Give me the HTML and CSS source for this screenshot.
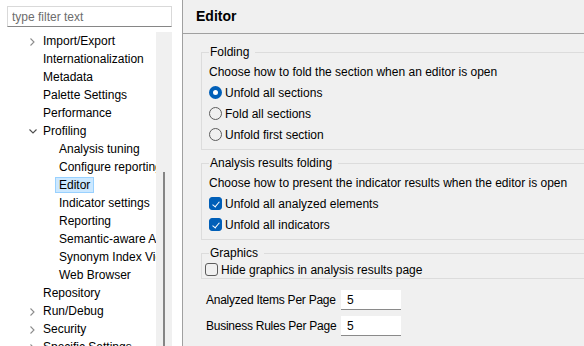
FILE: index.html
```html
<!DOCTYPE html>
<html>
<head>
    <title>Preferences - Editor</title>
    <link rel="stylesheet" href="styles.css">
</head>
<body>

<div class="window">
    <aside class="sidebar">
        <input class="filter" type="text" placeholder="type filter text">

        <div class="tree-area">
            <ul class="tree">
                <li class="row lvl1"><svg class="twistie" viewBox="0 0 16 16"><polyline class="closed" points="7.5,5.5 11,9 7.5,12.5"/></svg><span class="label">Import/Export</span></li>
                <li class="row lvl1"><span class="twistie"></span><span class="label">Internationalization</span></li>
                <li class="row lvl1"><span class="twistie"></span><span class="label">Metadata</span></li>
                <li class="row lvl1"><span class="twistie"></span><span class="label">Palette Settings</span></li>
                <li class="row lvl1"><span class="twistie"></span><span class="label">Performance</span></li>
                <li class="row lvl1"><svg class="twistie" viewBox="0 0 16 16"><polyline class="open" points="6.5,6.5 10,10 13.5,6.5"/></svg><span class="label">Profiling</span></li>
                <li class="row lvl2"><span class="twistie"></span><span class="label">Analysis tuning</span></li>
                <li class="row lvl2"><span class="twistie"></span><span class="label">Configure reporting</span></li>
                <li class="row lvl2"><span class="twistie"></span><span class="label selected">Editor</span></li>
                <li class="row lvl2"><span class="twistie"></span><span class="label">Indicator settings</span></li>
                <li class="row lvl2"><span class="twistie"></span><span class="label">Reporting</span></li>
                <li class="row lvl2"><span class="twistie"></span><span class="label">Semantic-aware Analysis</span></li>
                <li class="row lvl2"><span class="twistie"></span><span class="label">Synonym Index Viewer</span></li>
                <li class="row lvl2"><span class="twistie"></span><span class="label">Web Browser</span></li>
                <li class="row lvl1"><span class="twistie"></span><span class="label">Repository</span></li>
                <li class="row lvl1"><svg class="twistie" viewBox="0 0 16 16"><polyline class="closed" points="7.5,5.5 11,9 7.5,12.5"/></svg><span class="label">Run/Debug</span></li>
                <li class="row lvl1"><svg class="twistie" viewBox="0 0 16 16"><polyline class="closed" points="7.5,5.5 11,9 7.5,12.5"/></svg><span class="label">Security</span></li>
                <li class="row lvl1"><svg class="twistie" viewBox="0 0 16 16"><polyline class="closed" points="7.5,5.5 11,9 7.5,12.5"/></svg><span class="label">Specific Settings</span></li>
            </ul>
            <div class="scrollbar"><div class="thumb"></div></div>
        </div>
    </aside>

    <main class="page">
        <div class="page-title">Editor</div>

        <div class="page-body">
            <fieldset class="group">
                <legend>Folding</legend>
                <p class="hint">Choose how to fold the section when an editor is open</p>
                <label class="option"><input type="radio" name="fold" checked>Unfold all sections</label>
                <label class="option"><input type="radio" name="fold">Fold all sections</label>
                <label class="option"><input type="radio" name="fold">Unfold first section</label>
            </fieldset>

            <fieldset class="group">
                <legend>Analysis results folding</legend>
                <p class="hint">Choose how to present the indicator results when the editor is open</p>
                <label class="option"><input type="checkbox" checked>Unfold all analyzed elements</label>
                <label class="option"><input type="checkbox" checked>Unfold all indicators</label>
            </fieldset>

            <fieldset class="group graphics">
                <legend>Graphics</legend>
                <label class="option"><input type="checkbox">Hide graphics in analysis results page</label>
            </fieldset>

            <div class="fields">
                <label for="items_per_page">Analyzed Items Per Page</label>
                <input id="items_per_page" type="text" value="5">
                <label for="rules_per_page">Business Rules Per Page</label>
                <input id="rules_per_page" type="text" value="5">
            </div>
        </div>
    </main>
</div>

</body>
</html>
```

FILE: styles.css
```css
body {
    margin: 0;
    font-family: "Liberation Sans", Arial, sans-serif;
    font-size: 12px;
    color: #000;
    background-color: #f0f0f0;
    overflow: hidden;
}

.window {
    display: flex;
    height: 346px;
    overflow: hidden;
}

/* left navigation */
.sidebar {
    width: 182px;
    flex-shrink: 0;
    background-color: white;
    border-right: 1px solid #a0a0a0;
    display: flex;
    flex-direction: column;
}

.filter {
    box-sizing: border-box;
    width: 165px;
    height: 21px;
    margin: 6px 0 5px 7px;
    padding: 0 4px;
    border: 1px solid #d9d9d9;
    border-bottom-color: #868686;
    font-family: inherit;
    font-size: 12px;
    outline: none;
}

.filter::placeholder {
    color: #6d6d6d;
}

.tree-area {
    flex: 1;
    display: flex;
    min-height: 0;
}

.tree {
    width: 156px;
    margin: 0;
    padding: 0;
    list-style: none;
    overflow: hidden;
    white-space: nowrap;
}

.row {
    display: flex;
    align-items: center;
    height: 18px;
}

.lvl1 {
    padding-left: 23px;
}

.lvl2 {
    padding-left: 39px;
}

.twistie {
    width: 16px;
    height: 16px;
    flex-shrink: 0;
}

.twistie polyline {
    fill: none;
    stroke-width: 1.1;
}

.twistie .closed {
    stroke: #8c8c8c;
}

.twistie .open {
    stroke: #4d4d4d;
}

.label {
    line-height: 14px;
    padding: 0 3px;
    border: 1px solid transparent;
}

.label.selected {
    background-color: #cce8ff;
    border-color: #99d1ff;
}

.scrollbar {
    width: 16px;
    flex-shrink: 0;
    margin-right: 10px;
    background-color: #f0f0f0;
    padding: 140px 0 0 7px;
    box-sizing: border-box;
    display: flex;
}

.thumb {
    width: 2px;
    background-color: #858585;
}

/* right page */
.page {
    flex: 1;
    min-width: 0;
}

.page-title {
    height: 33px;
    line-height: 33px;
    padding-left: 13px;
    border-bottom: 1px solid #a0a0a0;
    font-size: 14px;
    font-weight: bold;
}

.page-body {
    padding: 10px 0 0 18px;
    overflow: hidden;
}

.group {
    margin: 0 -40px 5px 0;
    padding: 2px 0 4px 7px;
    border: 1px solid #dcdcdc;
    min-width: 0;
}

.group legend {
    line-height: 16px;
    padding: 0 6px 0 1px;
}

.hint {
    margin: 0;
    line-height: 20px;
}

.option {
    display: flex;
    align-items: center;
    height: 21px;
    white-space: nowrap;
}

.graphics {
    padding: 0 0 0 3px;
}

.graphics legend {
    margin-left: 4px;
}

.graphics .option {
    height: 17px;
}

/* radio and check boxes */
.option input {
    appearance: none;
    box-sizing: border-box;
    width: 13px;
    height: 13px;
    margin: 0 3px 0 0;
    border: 1px solid #5c5c5c;
    background-color: transparent;
    flex-shrink: 0;
    position: relative;
}

.option input[type="radio"] {
    border-radius: 50%;
}

.option input[type="radio"]:checked {
    border: 4px solid #005fb8;
    background-color: white;
}

.option input[type="checkbox"] {
    border-radius: 3px;
}

.option input[type="checkbox"]:checked {
    background-color: #005fb8;
    border-color: #005fb8;
}

.option input[type="checkbox"]:checked::after {
    content: "";
    position: absolute;
    left: 3.5px;
    top: 1.5px;
    width: 3px;
    height: 6px;
    border: solid white;
    border-width: 0 1px 1px 0;
    transform: rotate(40deg);
}

/* page size fields */
.fields {
    display: grid;
    grid-template-columns: 135px 60px;
    row-gap: 6px;
    margin: 11px 0 0 5px;
    align-items: center;
    white-space: nowrap;
}

.fields label {
    letter-spacing: -0.25px;
}

.fields input {
    box-sizing: border-box;
    height: 20px;
    padding: 0 6px;
    border: none;
    border-bottom: 1px solid #8a8a8a;
    background-color: white;
    font-family: inherit;
    font-size: 12px;
    outline: none;
}
```
